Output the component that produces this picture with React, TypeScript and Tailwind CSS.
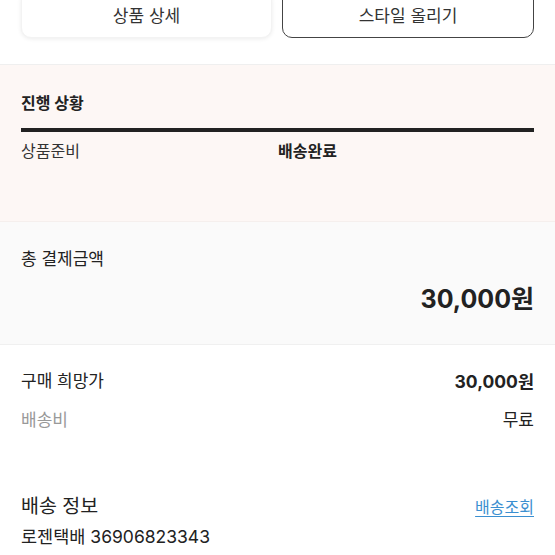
import React from "react";

export default function App() {
  return (
    <div
      className="w-[555px] h-[555px] overflow-hidden bg-white text-[#222]"
      style={{ fontFamily: 'Inter, "Noto Sans CJK KR", "Noto Sans", sans-serif' }}
    >
      {/* buttons */}
      <div className="h-[65px] px-[21px] flex gap-[10px] border-b border-[#efefef]">
        <button className="w-[251px] h-[48px] -mt-[10px] rounded-[10px] bg-white shadow-[0_1px_4px_rgba(0,0,0,0.08)] border border-[#f3f3f3] text-[17px] text-[#333] flex items-center justify-center pt-[6px]">
          상품 상세
        </button>
        <button className="w-[252px] h-[48px] -mt-[10px] rounded-[10px] bg-white border-[1.5px] border-[#444] text-[17px] text-[#333] flex items-center justify-center pt-[6px]">
          스타일 올리기
        </button>
      </div>

      {/* progress */}
      <div className="h-[157px] bg-[#fdf7f5] px-[21px] pt-[27px] border-b border-[#f5efed]">
        <div className="text-[16px] font-bold leading-[22px] text-[#222]">진행 상황</div>
        <div className="mt-[14px] h-[4px] bg-[#222]" />
        <div className="mt-[8px] flex text-[16px] leading-[22px]">
          <div className="w-[257px] text-[#333]">상품준비</div>
          <div className="font-bold text-[#222]">배송완료</div>
        </div>
      </div>

      {/* total */}
      <div className="h-[123px] bg-[#fafafa] px-[21px] pt-[25px] border-b border-[#f0f0f0]">
        <div className="text-[17px] leading-[24px] text-[#222]">총 결제금액</div>
        <div className="mt-[13px] text-right text-[25px] font-bold leading-[30px] text-[#222]">30,000원</div>
      </div>

      {/* price rows */}
      <div className="px-[21px] pt-[25px]">
        <div className="flex justify-between items-center h-[24px] text-[17px]">
          <span className="text-[#222]">구매 희망가</span>
          <span className="font-bold text-[17.5px] text-[#222]">30,000원</span>
        </div>
        <div className="mt-[15px] flex justify-between items-center h-[24px] text-[17px]">
          <span className="text-[#999]">배송비</span>
          <span className="text-[#222]">무료</span>
        </div>
      </div>

      {/* shipping */}
      <div className="px-[21px] pt-[60px]">
        <div className="flex justify-between items-center h-[28px]">
          <span className="text-[19.5px] text-[#222]">배송 정보</span>
          <span className="text-[16px] text-[#3b8fd0] underline underline-offset-[3px]">배송조회</span>
        </div>
        <div className="mt-[3px] text-[17.5px] leading-[26px] text-[#222]">로젠택배 36906823343</div>
      </div>
    </div>
  );
}
